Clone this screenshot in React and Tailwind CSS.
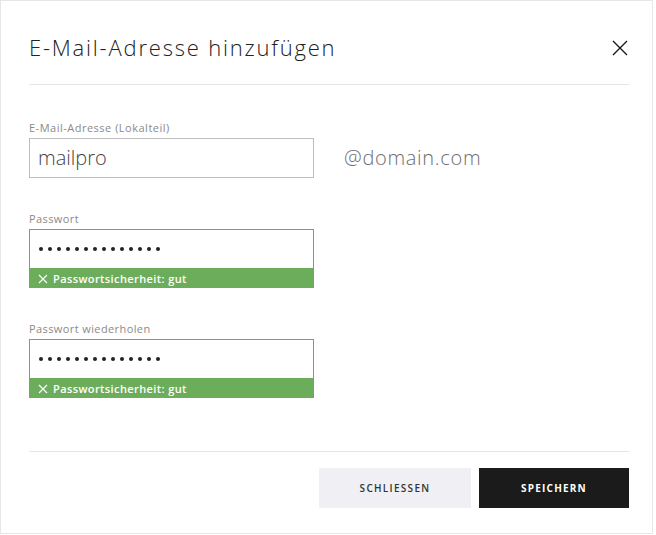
import React from "react";

const font = { fontFamily: '"Open Sans", "Liberation Sans", sans-serif' };

function CloseIcon() {
  return (
    <svg width="16" height="16" viewBox="0 0 16 16" className="block">
      <path d="M1 1 L15 15 M15 1 L1 15" stroke="#1a1a1a" strokeWidth="1.4" fill="none" />
    </svg>
  );
}

function SmallX() {
  return (
    <svg width="10" height="10" viewBox="0 0 10 10" className="block shrink-0">
      <path d="M1 1 L9 9 M9 1 L1 9" stroke="#ffffff" strokeWidth="1.2" fill="none" />
    </svg>
  );
}

function Dots() {
  return (
    <div className="flex items-center gap-[5px]">
      {Array.from({ length: 14 }).map((_, i) => (
        <span key={i} className="block w-[4px] h-[4px] rounded-full bg-[#222]" />
      ))}
    </div>
  );
}

function PasswortFeld({ label }) {
  return (
    <div className="mt-[34px]">
      <div className="text-[11px] leading-[14px] tracking-[0.4px] text-[#8a8a8a] mb-[3px]">
        {label}
      </div>
      <div className="w-[285px]">
        <div className="h-[40px] border border-[#6cad5c] flex items-center pl-[9px]">
          <Dots />
        </div>
        <div className="h-[19px] bg-[#6cad5c] flex items-center pl-[9px] gap-[5px]">
          <SmallX />
          <span className="text-[11px] font-semibold tracking-[0.4px] text-white leading-none">
            Passwortsicherheit: gut
          </span>
        </div>
      </div>
    </div>
  );
}

export default function App() {
  return (
    <div className="bg-white" style={font}>
      <div className="w-[653px] h-[534px] border border-[#e6e6e6] bg-white pl-[28px] pr-[23px] pt-[31px]">
        {/* Kopf */}
        <div className="flex items-center justify-between h-[30px]">
          <h1 className="text-[22px] leading-[30px] font-light tracking-[1.8px] text-[#222]">
            E-Mail-Adresse hinzufügen
          </h1>
          <div className="mr-[1px] mt-[2px]">
            <CloseIcon />
          </div>
        </div>
        <div className="mt-[22px] border-t border-[#e5e5e5]" />

        {/* Formular */}
        <div className="mt-[36px]">
          <div className="text-[11px] leading-[14px] tracking-[0.5px] text-[#8a8a8a] mb-[3px]">
            E-Mail-Adresse (Lokalteil)
          </div>
          <div className="flex items-center">
            <div className="w-[285px] h-[40px] border border-[#bdbdbd] flex items-center pl-[8px] text-[20px] font-light text-[#444]">
              mailpro
            </div>
            <span className="ml-[30px] text-[20px] font-light tracking-[0.7px] text-[#6e6e6e]">
              @domain.com
            </span>
          </div>
        </div>

        <PasswortFeld label="Passwort" />
        <PasswortFeld label="Passwort wiederholen" />

        {/* Fuss */}
        <div className="mt-[53px] border-t border-[#e5e5e5]" />
        <div className="mt-[16px] flex justify-end gap-[8px]">
          <button className="w-[152px] h-[40px] bg-[#f0f0f4] text-[10px] font-semibold tracking-[1.3px] text-[#333]">
            SCHLIESSEN
          </button>
          <button className="w-[150px] h-[40px] bg-[#1b1b1b] text-[10px] font-bold tracking-[1.2px] text-white">
            SPEICHERN
          </button>
        </div>
      </div>
    </div>
  );
}
